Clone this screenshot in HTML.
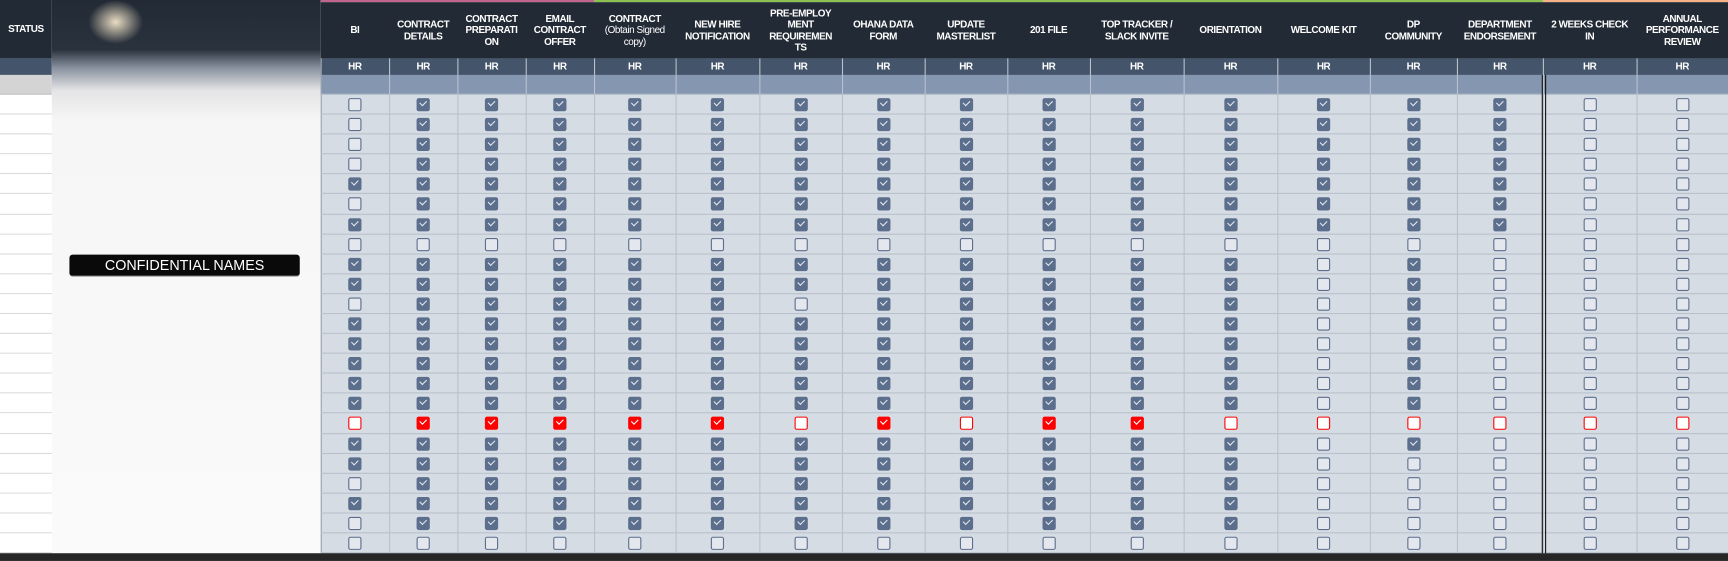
<!DOCTYPE html>
<html><head><meta charset="utf-8"><style>
html,body{margin:0;padding:0;width:1728px;height:561px;overflow:hidden;background:#fff}
#w{position:absolute;left:0;top:0;width:1568px;height:509px;transform:scale(1.10204);transform-origin:0 0;font-family:"Liberation Sans Narrow","Liberation Sans",sans-serif}
.a{position:absolute;box-sizing:border-box}
.h{color:#fff;font-weight:bold;font-size:9px;line-height:10.5px;text-align:center;display:flex;align-items:center;justify-content:center;letter-spacing:-0.4px}
.cb{position:absolute;width:12px;height:12px;box-sizing:border-box;border-radius:2px}
.u{border:1.6px solid #5b6e8c;background:#e4e8ee}
.c{background:#5b6e8c}
.c::after{content:"";position:absolute;left:3px;top:2px;width:5px;height:3px;border-left:1.4px solid #dfe4ec;border-bottom:1.4px solid #dfe4ec;transform:rotate(-45deg)}
.ru{border:1.6px solid #f00;background:#fff}
.rc{background:#f00}
.rc::after{content:"";position:absolute;left:3px;top:2px;width:5px;height:3px;border-left:1.5px solid #fff;border-bottom:1.5px solid #fff;transform:rotate(-45deg)}
</style></head><body><div id="w"></div>
<script>
var w=document.getElementById('w');
function d(x,y,wd,ht,st,cls,html){var e=document.createElement('div');e.className='a '+(cls||'');e.style.cssText='left:'+x+'px;top:'+y+'px;width:'+wd+'px;height:'+ht+'px;'+(st||'');if(html)e.innerHTML='<div>'+html+'</div>';w.appendChild(e);return e;}
var B=[291,353,415,477,539,613,689,764,839,914,989,1074,1159,1243,1322,1400,1485,1568];
var H=["BI","CONTRACT<br>DETAILS","CONTRACT<br>PREPARATI<br>ON","EMAIL<br>CONTRACT<br>OFFER","CONTRACT<br><span style='font-weight:normal'>(Obtain Signed<br>copy)</span>","NEW HIRE<br>NOTIFICATION","PRE-EMPLOY<br>MENT<br>REQUIREMEN<br>TS","OHANA DATA<br>FORM","UPDATE<br>MASTERLIST","201 FILE","TOP TRACKER /<br>SLACK INVITE","ORIENTATION","WELCOME KIT","DP<br>COMMUNITY","DEPARTMENT<br>ENDORSEMENT","2 WEEKS CHECK<br>IN","ANNUAL<br>PERFORMANCE<br>REVIEW"];
d(0,0,47,53,'background:#222a35');
d(0,0,47,53,'','h','STATUS');
d(0,53,47,15,'background:#44546a');
d(0,68,47,18,'background:#d4d4d4;border-bottom:1px solid #bbb');
for(var i=0;i<23;i++){d(0,86+i*18.09,47,18.09,'background:#fff;border-bottom:1px solid #d9d9d9');}
d(47,0,244,502,'background:linear-gradient(180deg,#222a35 0px,#2a323d 45px,#8a93a0 62px,#e4e4e6 82px,#f6f6f6 110px,#fafafa 502px)');
d(80,0,50,40,'background:radial-gradient(ellipse at center,#e9dcc2 0%,rgba(233,220,194,0) 70%)');
d(63,231,209,20,'background:#0a0a0a;border-radius:3px;color:#fff;font-family:\"Liberation Sans\",sans-serif;font-size:13px;line-height:20px;text-align:center;border-bottom:1px solid #777','', 'CONFIDENTIAL NAMES');
d(291,0,1277,502,'background:#d6dce4');
d(291,0,248,2,'background:#c0648e');
d(539,0,861,2,'background:#8cc152');
d(1400,0,168,2,'background:#f4b183');
d(291,2,1277,51,'background:#222a35');
d(291,53,1277,15,'background:#44546a');
d(291,68,1277,18,'background:#8496b0');
for(var k=0;k<17;k++){
 var x=B[k],wd=B[k+1]-x;
 d(x,2,wd,51,'','h',H[k]);
 d(x,53,wd,15,'','h','HR');
 d(x,53,1,449,'background:'+(k==0?'#9aa3ae':'#b9c1cc'));
}
for(var i=0;i<24;i++){d(291,86+i*18.09-1,1277,1,'background:#b9c1cc');}
d(1399,68,1,434,'background:#111');d(1402,68,1,434,'background:#111');
var R2=[
"01111111111111100","01111111111111100","01111111111111100","01111111111111100","11111111111111100","01111111111111100","11111111111111100","00000000000000000",
"11111111111101000","11111111111101000","01111101111101000","11111111111101000","11111111111101000","11111111111101000","11111111111101000","11111111111101000",
"01111101011000000","11111111111101000","11111111111100000","01111111111100000","11111111111100000","01111111111100000","00000000000000000"];
for(var i=0;i<23;i++){
 var y=86+i*18.09+3;
 for(var k=0;k<17;k++){
  var cx=(B[k]+B[k+1])/2-6, on=R2[i][k]=='1', red=(i==16);
  var cls=red?(on?'rc':'ru'):(on?'c':'u');
  var e=document.createElement('div');e.className='cb '+cls;e.style.left=cx+'px';e.style.top=y+'px';w.appendChild(e);
 }
}
d(0,502,1568,7,'background:#262626');
</script></body></html>
